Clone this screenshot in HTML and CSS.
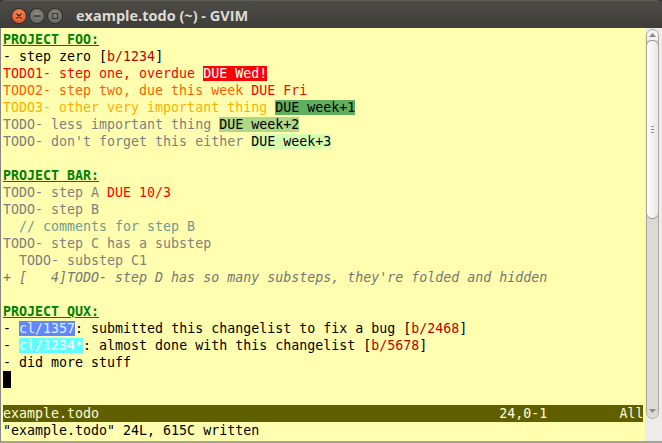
FILE: index.html
```html
<!DOCTYPE html>
<html>
<head>
<meta charset="utf-8">
<link rel="stylesheet" href="styles.css">
</head>
<body>
<div class="window">
  <div class="titlebar">
    <div class="buttons">
      <span class="btn close"><svg width="14" height="14" viewBox="0 0 14 14"><path d="M5 5 L9 9 M9 5 L5 9" stroke="#3a2418" stroke-width="1.4" stroke-linecap="round"/></svg></span>
      <span class="btn"><svg width="14" height="14" viewBox="0 0 14 14"><path d="M4 7 H10" stroke="#3c3b37" stroke-width="1.4" stroke-linecap="round"/></svg></span>
      <span class="btn"><svg width="14" height="14" viewBox="0 0 14 14"><rect x="4.5" y="4.5" width="5" height="5" fill="none" stroke="#3c3b37" stroke-width="1.2"/></svg></span>
    </div>
    <div class="title">example.todo (~) - GVIM</div>
  </div>
  <div class="body">
    <div class="editor">
      <div class="row"><span class="hdr">PROJECT FOO:</span></div>
      <div class="row">- step zero [<span class="bug">b/1234</span>]</div>
      <div class="row"><span class="red">TODO1- step one, overdue </span><span class="due-over">DUE Wed!</span></div>
      <div class="row"><span class="orange">TODO2- step two, due this week </span><span class="red">DUE Fri</span></div>
      <div class="row"><span class="amber">TODO3- other very important thing </span><span class="due1">DUE week+1</span></div>
      <div class="row"><span class="gray">TODO- less important thing </span><span class="due2">DUE week+2</span></div>
      <div class="row"><span class="gray">TODO- don't forget this either </span><span class="due3">DUE week+3</span></div>
      <div class="row"> </div>
      <div class="row"><span class="hdr">PROJECT BAR:</span></div>
      <div class="row"><span class="gray">TODO- step A </span><span class="red">DUE 10/3</span></div>
      <div class="row"><span class="gray">TODO- step B</span></div>
      <div class="row"><span class="comment">  // comments for step B</span></div>
      <div class="row"><span class="gray">TODO- step C has a substep</span></div>
      <div class="row"><span class="gray">  TODO- substep C1</span></div>
      <div class="row"><span class="fold">+ [   4]TODO- step D has so many substeps, they're folded and hidden</span></div>
      <div class="row"> </div>
      <div class="row"><span class="hdr">PROJECT QUX:</span></div>
      <div class="row">- <span class="cl1">cl/1357</span>: submitted this changelist to fix a bug [<span class="bug">b/2468</span>]</div>
      <div class="row">- <span class="cl2">cl/1234*</span>: almost done with this changelist [<span class="bug">b/5678</span>]</div>
      <div class="row">- did more stuff</div>
      <div class="row"><span class="cursor"></span></div>
      <div class="row"> </div>
      <div class="row status">example.todo                                                  24,0-1         All</div>
      <div class="row">"example.todo" 24L, 615C written</div>
    </div>
    <div class="scrollcol">
      <div class="scrollbar">
        <div class="arrow up"><svg width="7" height="4" viewBox="0 0 7 4"><path d="M0 4 L3.5 0 L7 4 Z" fill="#8d8b86"/></svg></div>
        <div class="thumb"><div class="grip"><i></i><i></i><i></i></div></div>
        <div class="trough"></div>
        <div class="arrow down"><svg width="7" height="4" viewBox="0 0 7 4"><path d="M0 0 L3.5 4 L7 0 Z" fill="#8d8b86"/></svg></div>
      </div>
    </div>
  </div>
</div>
</body>
</html>
```
FILE: styles.css
```css
html, body {
  margin: 0;
  padding: 0;
  background: #3c3b37;
}
.window {
  width: 662px;
  height: 443px;
  display: flex;
  flex-direction: column;
  overflow: hidden;
}
.titlebar {
  height: 28px;
  flex: none;
  display: flex;
  align-items: center;
  background: linear-gradient(#4d4c47, #3e3d39);
  border-top: 1px solid #5e5d58;
  border-radius: 6px 6px 0 0;
  box-sizing: border-box;
}
.buttons {
  display: flex;
  gap: 4px;
  padding-left: 12px;
  margin-top: 2px;
}
.btn {
  width: 14px;
  height: 14px;
  border-radius: 50%;
  background: radial-gradient(circle at 50% 35%, #8a8984, #5d5c58);
  box-shadow: 0 0 0 1px #2f2e2b;
  display: flex;
}
.btn.close {
  background: radial-gradient(circle at 50% 35%, #f68a5a, #dd4814);
}
.title {
  margin-left: 14px;
  margin-top: 1px;
  font-family: "Open Sans", "DejaVu Sans", sans-serif;
  font-weight: 700;
  font-size: 14.5px;
  color: #dfdbd2;
}
.body {
  flex: 1;
  display: flex;
  border-left: 1px solid #86857f;
  border-bottom: 2px solid #a3a29d;
  background: #ffffaf;
}
.editor {
  width: 640px;
  padding: 3px 2px 0 2px;
  background: #ffffaf;
  font-family: "DejaVu Sans Mono", monospace;
  font-size: 13.3px;
  color: #000;
}
.row {
  height: 17px;
  line-height: 17px;
  white-space: pre;
}
.hdr {
  color: #008000;
  font-weight: bold;
  text-decoration: underline;
}
.bug { color: #c00000; }
.red { color: #ff0000; }
.orange { color: #ff5f00; }
.amber { color: #ffaf00; }
.gray { color: #808080; }
.comment { color: #6f9a8f; }
.fold { color: #767676; font-style: italic; }
.due-over { background: #ff0000; color: #ffffff; }
.due1 { background: #5faf5f; color: #000; }
.due2 { background: #afd787; color: #000; }
.due3 { background: #d7ffaf; color: #000; }
.cl1 { background: #5f87ff; color: #e4ecff; }
.cl2 { background: #5fffff; color: #ffffff; }
.cursor {
  display: inline-block;
  width: 8px;
  height: 17px;
  background: #000;
  vertical-align: top;
}
.status {
  background: #5f5f00;
  color: #ffffd7;
}
.scrollcol {
  flex: 1;
  background: #edecea;
  padding: 1px 0 0 1px;
}
.scrollbar {
  width: 13px;
  height: 390px;
  box-sizing: border-box;
  border: 1px solid #a9a7a1;
  border-radius: 7px;
  background: #dcdad5;
  display: flex;
  flex-direction: column;
  overflow: hidden;
}
.arrow {
  height: 10px;
  flex: none;
  display: flex;
  align-items: center;
  justify-content: center;
  background: #f3f2f0;
}
.arrow.down {
  background: #dcdad5;
  height: 14px;
}
.thumb {
  height: 179px;
  flex: none;
  box-sizing: border-box;
  margin: 0 -1px;
  border: 1px solid #9a9893;
  border-radius: 6px;
  background: linear-gradient(to right, #fdfdfc, #e9e8e6);
  display: flex;
  align-items: center;
  justify-content: center;
}
.grip {
  display: flex;
  flex-direction: column;
  gap: 2px;
}
.grip i {
  display: block;
  width: 3px;
  height: 1px;
  background: #8f8d88;
}
.trough {
  flex: 1;
}
```
